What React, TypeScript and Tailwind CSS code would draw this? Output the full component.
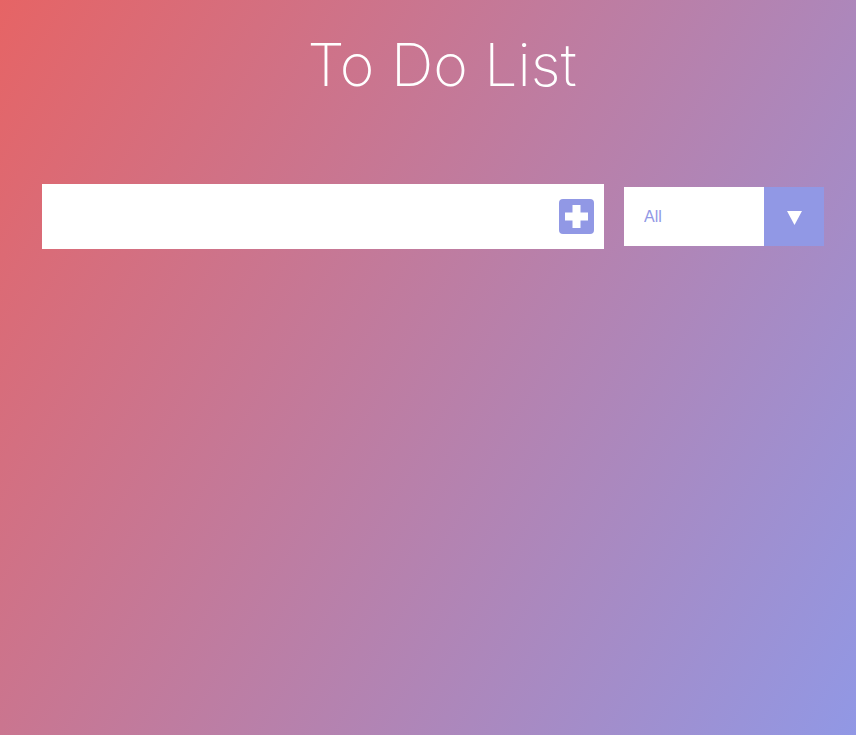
import React, { useState } from 'react';

export default function App() {
  const [text, setText] = useState('');
  const [filter, setFilter] = useState('all');

  return (
    <div className="min-h-screen w-full bg-[linear-gradient(120deg,#e66465,#9198e5)]">
      <header className="pl-[28px] pt-[26px] text-center">
        <h1 className="text-[59px] font-extralight leading-[78px] text-white [font-family:Inter,'Open_Sans',sans-serif]">
          To Do List
        </h1>
      </header>

      <form
        className="mt-[80px] flex items-center pl-[42px]"
        onSubmit={e => e.preventDefault()}
      >
        <div className="flex h-[65px] w-[562px] items-center bg-white pr-[10px]">
          <input
            type="text"
            value={text}
            onChange={e => setText(e.target.value)}
            className="h-full flex-1 px-4 text-2xl outline-none"
          />
          <button type="submit" className="flex h-[35px] w-[35px] items-center justify-center rounded-[4px] bg-[#9198e5]">
            <svg width="23" height="23" viewBox="0 0 23 23">
              <rect x="7.5" y="0" width="8" height="23" fill="white" />
              <rect x="0" y="7.5" width="23" height="8" fill="white" />
            </svg>
          </button>
        </div>

        <div className="relative ml-[20px] h-[59px] w-[200px] overflow-hidden bg-white">
          <select
            value={filter}
            onChange={e => setFilter(e.target.value)}
            className="h-full w-full cursor-pointer appearance-none pl-[20px] text-[16px] text-[#9198e5] outline-none [font-family:'Liberation_Sans',Arial,sans-serif]"
          >
            <option value="all">All</option>
            <option value="completed">Completed</option>
            <option value="uncompleted">Uncompleted</option>
          </select>
          <div className="pointer-events-none absolute right-0 top-0 flex h-full w-[60px] items-center justify-center bg-[#9198e5]">
            <svg width="15" height="14" viewBox="0 0 15 14" className="mt-[3px]">
              <polygon points="0,0 15,0 7.5,14" fill="white" />
            </svg>
          </div>
        </div>
      </form>

      <div className="flex flex-col items-center">
        <ul className="min-w-[30%]"></ul>
      </div>
    </div>
  );
}
